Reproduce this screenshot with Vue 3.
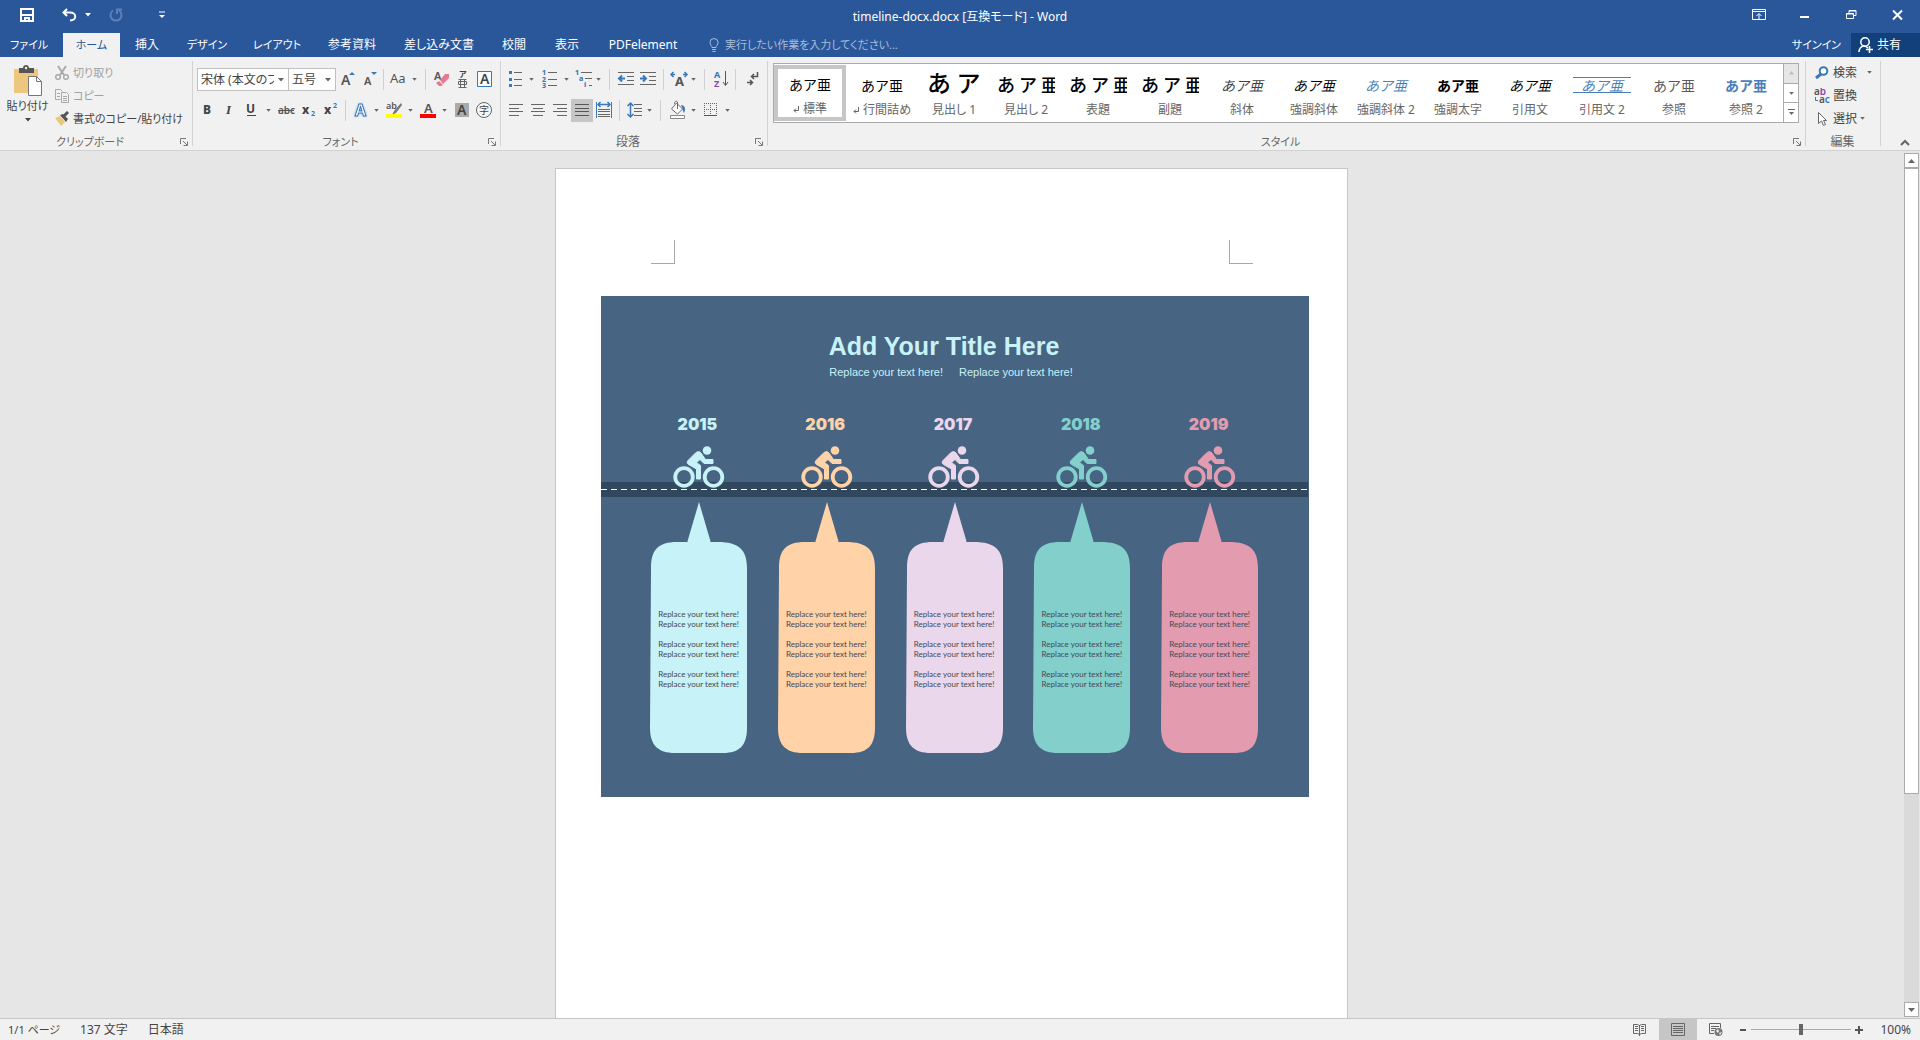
<script setup>
import { ref } from 'vue'

const GRAY = '#666'
const DARK = '#444'
const BLUE = '#3b78b8'
const PURPLE = '#8a4ba8'

// Small drawing helpers: a filled shape, a stroked line, and a letter.
const area = (d, fill, stroke = 'none') => ({ d, fill, stroke, sw: 1 })
const line = (d, stroke = GRAY, sw = 1, dash = null) => ({ d, fill: 'none', stroke, sw, dash })
const letter = (t, x, y, size, weight = 600, fill = '#555', extra = {}) => ({ t, x, y, size, weight, fill, ...extra })

const icons = {
  grow: [letter('A', 5, 17, 14), area('M13 7h6l-3-3z', BLUE)],
  shrink: [letter('A', 6, 17, 11), area('M13 4h6l-3 3z', BLUE)],
  case: [letter('Aa', 3, 15, 13, 400)],
  eraser: [letter('A', 3, 12, 11), area('M9 12l5-6h4v4l-6 6z', '#e8798c'), area('M8 13l4 4-2 1H8l-3-3z', '#e8798c')],
  ruby: [letter('ア', 8, 9, 8, 700, DARK), line('M7.5 11.5h8M7.5 19.5h8M9.5 11.5v8M13.5 11.5v8M7.5 13.5h8v3h-8z')],
  boxed: [area('M4.5 3.5h14v15h-14z', '#f8fbff', BLUE), letter('A', 7, 16, 14, 600, DARK)],
  bold: [letter('B', 7, 15, 12, 800, DARK)],
  italic: [letter('I', 8, 15, 13, 700, DARK, { family: 'Liberation Serif, serif', slant: 'italic' })],
  underline: [letter('U', 6, 14, 12, 700, DARK), line('M7 16.5h9', DARK)],
  strike: [letter('abc', 3, 15, 10), line('M3 11.5h16', '#555')],
  sub: [letter('x', 5, 15, 12, 800, DARK), letter('2', 14, 17, 7, 700, BLUE)],
  sup: [letter('x', 5, 15, 12, 800, DARK), letter('2', 14, 9, 7, 700, BLUE)],
  effect: [letter('A', 5, 17, 16, 700, '#fff', { halo: true })],
  highlight: [letter('ab', 4, 10, 9), area('M19 4l-7 8-2 4 4-2 6-8z', '#777'), area('M4 15h16v4H4z', '#ff0')],
  color: [letter('A', 7, 14, 13), area('M3 15h16v4H3z', '#f00')],
  shade: [area('M5 4h14v14H5z', '#aaa'), letter('A', 7, 16, 14, 600, DARK)],
  circled: [area('M3.5 11a7.5 7.5 0 1 1 15 0a7.5 7.5 0 1 1-15 0z', '#f8f8f8', GRAY), letter('字', 6, 15, 10, 400, DARK)],
  bullets: [area('M5 3h3v3H5zM5 10h3v3H5zM5 16h3v3H5z', BLUE), line('M10 4.5h8M10 11.5h8M10 17.5h8')],
  numbers: [letter('1', 5, 7, 7, 800, BLUE), letter('2', 5, 14, 7, 800, BLUE), letter('3', 5, 20, 7, 800, BLUE), line('M11 4.5h9M11 11.5h9M11 17.5h9')],
  multi: [letter('1', 3, 7, 7, 800, BLUE), letter('a', 7, 13, 7, 800, BLUE), letter('i', 12, 19, 7, 800, BLUE), line('M9 4.5h11M13 10.5h7M17 17.5h3')],
  outdent: [line('M2 4.5h16M11 8.5h7M11 12.5h7M2 16.5h16'), line('M9 10.5H3M6 7.5l-3 3 3 3', BLUE, 2)],
  indent: [line('M3 4.5h16M12 8.5h7M12 12.5h7M3 16.5h16'), line('M3 10.5h6M6 7.5l3 3-3 3', BLUE, 2)],
  stretch: [letter('A', 7, 18, 13, 700), line('M3 6.5h4M15 6.5h4M5.500 4l-2.500 2.500 2.500 2.500M16.500 4l2.500 2.500-2.500 2.500', BLUE, 1.5)],
  sort: [letter('A', 3, 10, 9, 700, BLUE), letter('Z', 3, 19, 9, 700, PURPLE), line('M14.5 3v14M12 14l2.500 3.500L17 14', '#555')],
  marks: [line('M17.5 4v4.5H12M14 6l-2.500 2.500 2.500 2.500M7 14.5h5M10 12l2.500 2.500L10 17', '#555', 1.5)],
  left: [line('M4 5.5h14M4 9.5h10M4 12.5h14M4 16.5h10')],
  center: [line('M4 5.5h14M6 9.5h10M4 12.5h14M6 16.5h10')],
  right: [line('M4 5.5h14M8 9.5h10M4 12.5h14M8 16.5h10')],
  justify: [line('M4 5.5h14M4 9.5h14M4 12.5h14M4 16.5h14', '#555')],
  distribute: [line('M3.5 3v16M18.5 3v16', BLUE), line('M5 5.5h12M7.500 3L5 5.500 7.500 8M14.500 3L17 5.500 14.500 8', BLUE, 1.5), line('M5 10.5h12M5 12.5h12M5 15.5h12M5 17.5h12')],
  spacing: [line('M6.5 4v14M3.5 7l3-3 3 3M3.5 15l3 3 3-3', BLUE, 1.5), line('M10 5.5h8M10 9.5h8M10 12.5h8M10 16.5h8')],
  bucket: [area('M9.5 4l6 6-5 5-6-5z', '#fff', GRAY), line('M10.5 10V3c-2-2-3 0-3 2'), area('M14 6c4 0 5 4 3 8-1-1-1-4-3-8z', BLUE), area('M3.5 16.5h14v3h-14z', '#fff', '#888')],
  borders: [line('M5 4.5h13M5 10.5h13M5.5 4v12M11.5 4v12M17.5 4v12', GRAY, 1, '1 1'), line('M5 16.5h13', '#555')],
}

const tabs = [
  { label: 'ファイル', w: 58, kana: true },
  { label: 'ホーム', w: 57, kana: true, active: true },
  { label: '挿入', w: 54 },
  { label: 'デザイン', w: 66, kana: true },
  { label: 'レイアウト', w: 74, kana: true },
  { label: '参考資料', w: 76 },
  { label: '差し込み文書', w: 98 },
  { label: '校閲', w: 52 },
  { label: '表示', w: 54 },
  { label: 'PDFelement', w: 98 },
]

const fontRow1 = [
  { icon: 'grow', w: 22, label: 'フォントの拡大' },
  { icon: 'shrink', w: 22, label: 'フォントの縮小' },
  { sep: true, w: 7 },
  { icon: 'case', w: 22, label: '文字種の変換' },
  { caret: true, w: 11 },
  { sep: true, w: 11 },
  { icon: 'eraser', w: 20, label: '書式のクリア' },
  { icon: 'ruby', w: 22, label: 'ルビ' },
  { icon: 'boxed', w: 22, label: '囲み線' },
]
const fontRow2 = [
  { icon: 'bold', w: 22, label: '太字' },
  { icon: 'italic', w: 22, label: '斜体' },
  { icon: 'underline', w: 22, label: '下線' },
  { caret: true, w: 13 },
  { icon: 'strike', w: 22, label: '取り消し線' },
  { icon: 'sub', w: 22, label: '下付き' },
  { icon: 'sup', w: 22, label: '上付き' },
  { sep: true, w: 9 },
  { icon: 'effect', w: 21, label: '文字の効果' },
  { caret: true, w: 11 },
  { icon: 'highlight', w: 22, label: '蛍光ペンの色' },
  { caret: true, w: 13 },
  { icon: 'color', w: 22, label: 'フォントの色' },
  { caret: true, w: 11 },
  { icon: 'shade', w: 23, label: '文字の網かけ' },
  { icon: 'circled', w: 22, label: '囲い文字' },
]
const paraRow1 = [
  { icon: 'bullets', w: 22, label: '箇条書き' },
  { caret: true, w: 11 },
  { icon: 'numbers', w: 24, label: '段落番号' },
  { caret: true, w: 11 },
  { icon: 'multi', w: 22, label: 'アウトライン' },
  { caret: true, w: 9 },
  { sep: true, w: 13 },
  { icon: 'outdent', w: 21, label: 'インデントを減らす' },
  { icon: 'indent', w: 22, label: 'インデントを増やす' },
  { sep: true, w: 9 },
  { icon: 'stretch', w: 21, label: '拡張書式' },
  { caret: true, w: 9 },
  { sep: true, w: 13 },
  { icon: 'sort', w: 20, label: '並べ替え' },
  { sep: true, w: 9 },
  { icon: 'marks', w: 22, label: '編集記号の表示' },
]
const paraRow2 = [
  { icon: 'left', w: 22, label: '左揃え' },
  { icon: 'center', w: 22, label: '中央揃え' },
  { icon: 'right', w: 22, label: '右揃え' },
  { icon: 'justify', w: 22, label: '両端揃え', on: true },
  { icon: 'distribute', w: 22, label: '均等割り付け' },
  { sep: true, w: 9 },
  { icon: 'spacing', w: 21, label: '行間' },
  { caret: true, w: 9 },
  { sep: true, w: 13 },
  { icon: 'bucket', w: 21, label: '塗りつぶし' },
  { caret: true, w: 11 },
  { icon: 'borders', w: 22, label: '罫線' },
  { caret: true, w: 13 },
]
const toolbars = { font: [fontRow1, fontRow2], para: [paraRow1, paraRow2] }

const styles = [
  { name: '標準', sample: 'あア亜', mark: true, on: true },
  { name: '行間詰め', sample: 'あア亜', mark: true },
  { name: '見出し 1', sample: 'あ ア', kind: 'h1' },
  { name: '見出し 2', sample: 'あ ア 亜', kind: 'h2' },
  { name: '表題', sample: 'あ ア 亜', kind: 'h2' },
  { name: '副題', sample: 'あ ア 亜', kind: 'h2' },
  { name: '斜体', sample: 'あア亜', kind: 'it' },
  { name: '強調斜体', sample: 'あア亜', kind: 'it dark' },
  { name: '強調斜体 2', sample: 'あア亜', kind: 'it blue' },
  { name: '強調太字', sample: 'あア亜', kind: 'strong' },
  { name: '引用文', sample: 'あア亜', kind: 'it dark' },
  { name: '引用文 2', sample: 'あア亜', kind: 'it blue lines' },
  { name: '参照', sample: 'あア亜', kind: 'ref' },
  { name: '参照 2', sample: 'あア亜', kind: 'strong blue' },
]

const years = [
  { year: 2015, color: '#c6f2f8' },
  { year: 2016, color: '#ffd2a8' },
  { year: 2017, color: '#ebd7eb' },
  { year: 2018, color: '#82cfcc' },
  { year: 2019, color: '#e39bb0' },
]

const zoom = ref(50)
</script>

<template>
  <div class="app">
    <svg class="defs" aria-hidden="true">
      <symbol id="i-caret" viewBox="0 0 6 4"><path d="M0 0h6L3 3.500z" fill="currentColor" /></symbol>
      <symbol id="i-launch" viewBox="0 0 8 8"><path d="M.5 6V.5H6M3 3l4 4M7.500 3.500v4h-4" fill="none" stroke="#777" /></symbol>
      <symbol id="i-cyclist" viewBox="0 0 52 42"><g fill="none" stroke="currentColor" stroke-width="3.800"><circle cx="11" cy="31" r="8.800" /><circle cx="40.500" cy="31" r="8.800" /></g><circle cx="34" cy="4.500" r="4.300" fill="currentColor" /><path d="M23 6.500Q26 4.500 28 7L32.500 13.500H40V17.500H31L27 13.500 23.500 16.500 27.500 19.500V33H23.500V23L15.500 18.500Q13 17 15 14.500Z" fill="currentColor" stroke="currentColor" stroke-linejoin="round" /></symbol>
    </svg>

    <header class="titlebar">
      <div class="quick">
        <button type="button" class="q-save" aria-label="上書き保存">
          <svg width="14" height="14"><path d="M1 1h12v12H1z" fill="none" stroke="#fff" stroke-width="2" /><path d="M2 6h10v2H2zM4 9h6v4H8v-2H6v2H4z" fill="#fff" /></svg>
        </button>
        <button type="button" class="q-undo" aria-label="元に戻す">
          <svg width="15" height="14"><path d="M5 1L1.500 4.500 5 8M2 4.500h6c7 0 7 8 0 8" fill="none" stroke="#fff" stroke-width="2" /></svg>
        </button>
        <button type="button" class="q-drop" aria-label="元に戻す一覧"><svg width="6" height="4"><use href="#i-caret" /></svg></button>
        <button type="button" class="q-redo" aria-label="やり直し">
          <svg width="14" height="14"><path d="M4 2.500a5.500 5.500 0 1 0 6 0M8 6V1.500h5" fill="none" stroke="#5c80b8" stroke-width="2" /></svg>
        </button>
        <button type="button" class="q-more" aria-label="クイック アクセス ツール バーのカスタマイズ">
          <svg width="6" height="8"><path d="M0 1h6" stroke="#fff" stroke-width="1" /><path d="M0 4h6L3 7z" fill="#fff" /></svg>
        </button>
      </div>
      <h1 class="title">timeline-docx.docx [互換モード] - Word</h1>
      <div class="window">
        <button type="button" aria-label="リボンの表示オプション"><svg width="14" height="12"><path d="M.5 .5h13v10h-13zM1 2.500h12M7 10V5M4.500 7L7 4.500 9.500 7" fill="none" stroke="#fff" /></svg></button>
        <button type="button" aria-label="最小化"><svg width="10" height="12"><path d="M0 8h9" stroke="#fff" stroke-width="2" /></svg></button>
        <button type="button" aria-label="元に戻す (縮小)"><svg width="11" height="12"><path d="M.5 4.500h7v5h-7zM.5 5h7M3 4V1.500h7v5H8M3 2h7" fill="none" stroke="#fff" /></svg></button>
        <button type="button" aria-label="閉じる"><svg width="11" height="12"><path d="M1 1.500l9 9M10 1.500l-9 9" stroke="#fff" stroke-width="2" /></svg></button>
      </div>
    </header>

    <nav class="tabs">
      <button v-for="t in tabs" :key="t.label" type="button" class="tab" :class="{ active: t.active, kana: t.kana }" :style="{ width: t.w + 'px' }">{{ t.label }}</button>
      <label class="tell">
        <svg width="10" height="14" aria-hidden="true"><path d="M3 9.500C3 8 1 7 1 4.500a4 4 0 0 1 8 0C9 7 7 8 7 9.500zM3 11.500h4M3.500 13.500h3" fill="none" stroke="#a9bdd9" /></svg>
        <input type="text" class="kana" placeholder="実行したい作業を入力してください..." aria-label="実行したい作業" />
      </label>
      <a class="signin kana" href="#">サインイン</a>
      <button type="button" class="share">
        <svg width="15" height="16" aria-hidden="true"><circle cx="7" cy="5" r="4.200" fill="none" stroke="#fff" stroke-width="1.500" /><path d="M1 15c0-3 2-6 5-6 2 0 3 1 4 2M8 12.500h7M11.500 9v7" fill="none" stroke="#fff" stroke-width="1.500" /></svg>
        共有
      </button>
    </nav>

    <section class="ribbon">
      <div class="group clipboard">
        <div class="content">
          <button type="button" class="paste kana">
            <svg width="30" height="31" aria-hidden="true"><path d="M1 4h24v24H1z" fill="#ecc77d" /><path d="M6 8V3h4c0-4 6-4 6 0h5v5z" fill="#555" /><circle cx="13" cy="3" r="1.200" fill="#f1f1f1" /><path d="M15.500 11.500h8l5 5v14h-13z" fill="#fff" stroke="#777" /><path d="M23.500 11.500v5h5" fill="none" stroke="#777" /></svg>
            <span>貼り付け</span>
            <svg width="6" height="4" aria-hidden="true"><use href="#i-caret" /></svg>
          </button>
          <div class="stack">
            <button type="button" class="dim kana">
              <svg width="14" height="16" aria-hidden="true"><path d="M3 1l6 9M11 1l-6 9" stroke="#aaa" stroke-width="2" /><circle cx="3" cy="12" r="2.300" fill="none" stroke="#aaa" stroke-width="1.500" /><circle cx="11" cy="12" r="2.300" fill="none" stroke="#aaa" stroke-width="1.500" /></svg>切り取り
            </button>
            <button type="button" class="dim kana">
              <svg width="14" height="16" aria-hidden="true"><path d="M5.500 11.500h-5v-10h5l2 2M6.500 4.500h5l2 2v8h-7z" fill="none" stroke="#aaa" /><path d="M2 5.500h3M2 8.500h3M8 8.500h4M8 10.500h4M8 12.500h4" stroke="#aaa" /></svg>コピー
            </button>
            <button type="button" class="kana">
              <svg width="14" height="16" aria-hidden="true"><path d="M0 7l5-2 5 6-4 4z" fill="#ecc77d" /><path d="M5 4l3-1 5 5-2 3z" fill="#555" /><path d="M9 5l4-4" stroke="#555" stroke-width="3" /></svg>書式のコピー/貼り付け
            </button>
          </div>
        </div>
        <div class="caption"><span class="kana">クリップボード</span><button type="button" aria-label="クリップボードの詳細"><svg width="8" height="8"><use href="#i-launch" /></svg></button></div>
      </div>

      <div v-for="(rows, key) in toolbars" :key="key" class="group" :class="key">
        <div class="content rows">
          <div v-for="(row, r) in rows" :key="r" class="row">
            <template v-if="key === 'font' && r === 0">
              <span class="combo name"><select aria-label="フォント"><option>宋体 (本文のフォント)</option></select><svg width="6" height="4" aria-hidden="true"><use href="#i-caret" /></svg></span>
              <span class="combo size"><select aria-label="フォント サイズ"><option>五号</option></select><svg width="6" height="4" aria-hidden="true"><use href="#i-caret" /></svg></span>
            </template>
            <template v-for="(it, n) in row" :key="n">
              <span v-if="it.sep" class="sep" :style="{ width: it.w + 'px' }"></span>
              <button v-else-if="it.caret" type="button" class="drop" aria-label="その他" :style="{ width: it.w + 'px' }"><svg width="5" height="3"><use href="#i-caret" /></svg></button>
              <button v-else type="button" class="tool" :class="{ on: it.on }" :aria-label="it.label" :style="{ width: it.w + 'px' }">
                <svg width="22" height="22">
                  <template v-for="(g, k) in icons[it.icon]" :key="k">
                    <text v-if="g.t" :class="{ halo: g.halo }" :x="g.x" :y="g.y" :font-size="g.size" :font-weight="g.weight" :font-family="g.family" :font-style="g.slant" :fill="g.fill">{{ g.t }}</text>
                    <path v-else :d="g.d" :fill="g.fill" :stroke="g.stroke" :stroke-width="g.sw" :stroke-dasharray="g.dash" />
                  </template>
                </svg>
              </button>
            </template>
          </div>
        </div>
        <div class="caption"><span :class="{ kana: key === 'font' }">{{ key === 'font' ? 'フォント' : '段落' }}</span><button type="button" aria-label="詳細"><svg width="8" height="8"><use href="#i-launch" /></svg></button></div>
      </div>

      <div class="group styles">
        <div class="content">
          <div class="gallery">
            <div class="items">
              <button v-for="s in styles" :key="s.name" type="button" class="style" :class="{ on: s.on }">
                <span class="sample" :class="s.kind">{{ s.sample }}</span>
                <span class="name"><svg v-if="s.mark" width="6" height="7" aria-hidden="true"><path d="M5.500 0v4.500H1M3 2.500l-2 2 2 2" fill="none" stroke="#666" /></svg>{{ s.name }}</span>
              </button>
            </div>
            <div class="pager">
              <button type="button" class="off" aria-label="前の行"><svg width="5" height="4"><path d="M0 3.500h5L2.500 0z" fill="#bbb" /></svg></button>
              <button type="button" aria-label="次の行"><svg width="5" height="3"><use href="#i-caret" /></svg></button>
              <button type="button" aria-label="すべてのスタイル"><svg width="7" height="7"><path d="M0 .5h7" stroke="#666" /><path d="M1 3h5L3.500 6z" fill="#666" /></svg></button>
            </div>
          </div>
        </div>
        <div class="caption"><span class="kana">スタイル</span><button type="button" aria-label="スタイルの詳細"><svg width="8" height="8"><use href="#i-launch" /></svg></button></div>
      </div>

      <div class="group editing">
        <div class="content stack">
          <button type="button"><svg width="16" height="16" aria-hidden="true"><circle cx="9.500" cy="6" r="3.800" fill="#fff" stroke="#3b78b8" stroke-width="2" /><path d="M7 9l-5 4" stroke="#3b78b8" stroke-width="3" /></svg>検索<svg class="far" width="5" height="3" aria-hidden="true"><use href="#i-caret" /></svg></button>
          <button type="button"><svg width="16" height="16" aria-hidden="true"><g font-size="10" font-weight="600"><text x="0" y="7"><tspan fill="#555">a</tspan><tspan fill="#8a4ba8">b</tspan></text><text x="5" y="15"><tspan fill="#555">a</tspan><tspan fill="#3b78b8">c</tspan></text></g><path d="M1.500 9v3.500H4" fill="none" stroke="#3b78b8" /></svg>置換</button>
          <button type="button"><svg width="16" height="16" aria-hidden="true"><path d="M4.500 1.500v11l3-2.500 2 4.500 2-1-2-4h3z" fill="#fff" stroke="#666" /></svg>選択<svg class="near" width="5" height="3" aria-hidden="true"><use href="#i-caret" /></svg></button>
        </div>
        <div class="caption"><span>編集</span></div>
      </div>
      <button type="button" class="collapse" aria-label="リボンを折りたたむ"><svg width="10" height="7"><path d="M1 6l4-4 4 4" fill="none" stroke="#666" stroke-width="2" /></svg></button>
    </section>

    <main class="work">
      <div class="canvas">
        <article class="page">
          <div class="margins"><i class="corner tl"></i><i class="corner tr"></i></div>
          <div class="picture">
            <h2>Add Your Title Here</h2>
            <p class="lead"><span>Replace your text here!</span><span>Replace your text here!</span></p>
            <div class="columns heads">
              <div v-for="y in years" :key="y.year" class="head" :style="{ color: y.color }">
                <strong>{{ y.year }}</strong>
                <svg width="52" height="42" aria-hidden="true"><use href="#i-cyclist" /></svg>
              </div>
            </div>
            <div class="road"></div>
            <div class="columns">
              <div v-for="y in years" :key="y.year" class="callout" :style="{ color: y.color }">
                <svg viewBox="0 0 97 251" aria-hidden="true"><path d="M37 41L49 0L61 41V40H68C89 40 97 48 97 66V226C97 243 90 251 73 251H25C8 251 0 243 0 226L1 66C1 48 8 40 27 40H37Z" fill="currentColor" /></svg>
                <div class="note">
                  <p v-for="k in 3" :key="k">Replace your text here!<br />Replace your text here!</p>
                </div>
              </div>
            </div>
          </div>
        </article>
      </div>
      <div class="scroll">
        <button type="button" aria-label="上へスクロール"><svg width="7" height="4"><path d="M0 4h7L3.500 0z" fill="#666" /></svg></button>
        <div class="rail"><div class="thumb"></div></div>
        <button type="button" aria-label="下へスクロール"><svg width="7" height="4"><path d="M0 0h7L3.500 4z" fill="#666" /></svg></button>
      </div>
    </main>

    <footer class="status">
      <span class="kana">1/1 ページ</span><span>137 文字</span><span>日本語</span>
      <div class="views">
        <button type="button" aria-label="閲覧モード"><svg width="14" height="14"><path d="M6.500 2.500l-2-1h-4v9h4l2 1 2-1h4v-9h-4zM6.500 2v11M2 3.500h3M2 5.500h3M2 7.500h3M8 3.500h3M8 5.500h3M8 7.500h3" fill="none" stroke="#666" /></svg></button>
        <button type="button" class="on" aria-label="印刷レイアウト"><svg width="14" height="14"><path d="M.5 .5h13v12H.5zM2 3.500h10M2 5.500h10M2 7.500h10M2 9.500h10" fill="none" stroke="#666" /></svg></button>
        <button type="button" aria-label="Web レイアウト"><svg width="14" height="14"><path d="M5 10.500H.5V.5h11V5M2 3.500h8M2 5.500h5M2 7.500h3" fill="none" stroke="#666" /><circle cx="9.500" cy="9" r="4" fill="#777" /><path d="M7 8l2-2 1 2-1 2zM10 10l3-1-2 3z" fill="#f1f1f1" /></svg></button>
      </div>
      <div class="zoom">
        <button type="button" aria-label="縮小"><svg width="8" height="8"><path d="M1 4h6" stroke="#555" stroke-width="2" /></svg></button>
        <input v-model="zoom" type="range" min="0" max="100" aria-label="ズーム" />
        <button type="button" aria-label="拡大"><svg width="8" height="8"><path d="M0 4h8M4 0v8" stroke="#555" stroke-width="2" /></svg></button>
      </div>
      <span class="percent">100%</span>
    </footer>
  </div>
</template>

<style>
body {
  margin: 0;
  overflow: hidden;
}
</style>

<style scoped>
.app {
  display: flex;
  flex-direction: column;
  height: 100vh;
  font: 12px/16px "Noto Sans", "Noto Sans CJK JP", sans-serif;
  font-feature-settings: "palt";
  color: #444;
  background: #e6e6e6;
}
.app *,
.app {
  box-sizing: border-box;
}
.defs {
  position: absolute;
  width: 0;
  height: 0;
}
button,
select,
input {
  margin: 0;
  padding: 0;
  border: 0;
  border-radius: 0;
  background: none;
  font: inherit;
  font-feature-settings: inherit;
  color: inherit;
  white-space: nowrap;
}
.app .kana {
  font-size: 11px;
}
svg {
  display: block;
  flex: none;
}
.halo {
  stroke: #3b78b8;
  filter: drop-shadow(0 0 1px #8ab8e8);
}

.titlebar {
  display: grid;
  grid-template-columns: 1fr auto 1fr;
  height: 33px;
  background: #2a579a;
  color: #fff;
}
.quick {
  display: flex;
  align-items: center;
  padding: 0 0 3px 20px;
}
.q-undo {
  margin-left: 28px;
}
.q-drop {
  margin-left: 8px;
}
.q-redo {
  margin-left: 18px;
}
.q-more {
  margin-left: 36px;
}
.title {
  margin: 0;
  font-size: 12px;
  font-weight: 400;
  line-height: 33px;
}
.window {
  display: flex;
  justify-content: flex-end;
  padding-bottom: 3px;
}
.window button {
  display: flex;
  align-items: center;
  justify-content: center;
  width: 46px;
}

.tabs {
  display: flex;
  height: 24px;
  background: #2a579a;
  color: #fff;
}
.tab {
  text-align: center;
}
.tab:first-child {
  margin-right: 5px;
}
.tab.active {
  background: #f1f1f1;
  color: #2a579a;
}
.tell {
  display: flex;
  flex: 1;
  align-items: center;
  gap: 6px;
  margin-left: 17px;
}
.tell input {
  flex: 1;
  outline: 0;
}
.tell input::placeholder {
  color: #a9bdd9;
  opacity: 1;
}
.signin {
  margin-right: 10px;
  color: #fff;
  line-height: 24px;
  text-decoration: none;
}
.share {
  display: flex;
  align-items: center;
  gap: 4px;
  width: 69px;
  padding-left: 7px;
  background: #12407a;
}

.ribbon {
  display: flex;
  height: 94px;
  border-bottom: 1px solid #d2d2d2;
  background: #f1f1f1;
}
.group {
  display: flex;
  flex-direction: column;
  position: relative;
}
.group::after {
  content: "";
  position: absolute;
  top: 4px;
  right: 0;
  bottom: 4px;
  width: 1px;
  background: #d2d2d2;
}
.clipboard {
  width: 193px;
}
.font {
  width: 308px;
}
.para {
  width: 267px;
}
.styles {
  flex: 1;
  min-width: 0;
}
.editing {
  width: 75px;
}
.content {
  display: flex;
  height: 75px;
}
.caption {
  display: flex;
  align-items: center;
  height: 18px;
  padding: 1px 5px 0 0;
  color: #666;
}
.caption span {
  flex: 1;
  text-align: center;
}
.editing .caption {
  padding-right: 2px;
}
.paste {
  display: flex;
  flex-direction: column;
  align-items: center;
  width: 55px;
  padding-top: 8px;
}
.paste span {
  margin: 2px 0 4px;
}
.stack {
  display: flex;
  flex-direction: column;
  padding-top: 4px;
}
.stack button {
  display: flex;
  align-items: center;
  gap: 4px;
  height: 23px;
}
.stack .dim {
  color: #a0a0a0;
}
.editing .stack {
  padding-left: 8px;
}
.editing .stack button {
  gap: 3px;
}
.editing .stack .far {
  margin-left: 7px;
}

.rows {
  flex-direction: column;
  gap: 8px;
  padding-top: 11px;
}
.row {
  display: flex;
  height: 23px;
  padding-left: 3px;
}
.para .row:last-child {
  padding-left: 4px;
}
.tool {
  display: flex;
  align-items: flex-start;
}
.tool.on {
  background: #c6c6c6;
}
.drop,
.sep {
  display: flex;
  align-items: center;
  justify-content: center;
}
.drop,
.near,
.far {
  color: #666;
}
.sep::before {
  content: "";
  width: 1px;
  height: 21px;
  background: #d0d0d0;
}
.combo {
  display: flex;
  align-items: center;
  height: 23px;
  padding-left: 3px;
  border: 1px solid #c0c0c0;
  background: #fff;
}
.combo.name {
  width: 92px;
  margin-left: 1px;
}
.combo.size {
  width: 48px;
  margin-left: -1px;
}
.combo select {
  flex: 1;
  min-width: 0;
  overflow: hidden;
  appearance: none;
}
.combo svg {
  margin: 0 4px;
  color: #666;
}

.styles .content {
  padding: 6px 7px 8px 5px;
}
.gallery {
  display: flex;
  flex: 1;
  min-width: 0;
  height: 60px;
  border: 1px solid #ababab;
  background: #fff;
}
.items {
  display: flex;
  flex: 1;
  min-width: 0;
  overflow: hidden;
}
.style {
  display: flex;
  flex: none;
  flex-direction: column;
  align-items: center;
  width: 72px;
  height: 56px;
  margin-top: 1px;
  padding-top: 4px;
  border: 0 solid #c6c6c6;
}
.style.on {
  padding-top: 0;
  border-width: 4px;
}
.sample {
  display: flex;
  align-items: center;
  justify-content: center;
  width: 58px;
  height: 31px;
  overflow: hidden;
  font-family: "Noto Sans CJK JP", sans-serif;
  font-feature-settings: normal;
  font-size: 14px;
  color: #000;
  white-space: pre;
}
.sample.h1,
.sample.h2 {
  justify-content: flex-start;
  padding-bottom: 2px;
  font-size: 18px;
  font-weight: 500;
}
.sample.h1 {
  width: 54px;
  padding-bottom: 6px;
  font-size: 24px;
}
.sample.it {
  font-style: italic;
  color: #404040;
}
.sample.dark {
  color: #000;
}
.sample.blue {
  color: #4a7ebb;
}
.sample.strong {
  font-weight: 700;
}
.sample.ref {
  color: #5a5a5a;
}
.sample.lines {
  height: 16px;
  margin: 8px 0 7px;
  border: solid #4a7ebb;
  border-width: 1px 0;
}
.style .name {
  display: flex;
  align-items: center;
  gap: 4px;
  margin-top: 2px;
  color: #666;
}
.pager {
  display: flex;
  flex-direction: column;
  width: 15px;
  border-left: 1px solid #ababab;
  color: #666;
}
.pager button {
  display: flex;
  flex: 1;
  align-items: center;
  justify-content: center;
}
.pager button + button {
  border-top: 1px solid #ababab;
}
.pager .off {
  background: #e6e6e6;
}
.collapse {
  display: flex;
  align-items: flex-end;
  justify-content: flex-end;
  width: 39px;
  padding: 0 10px 4px 0;
}

.work {
  display: flex;
  flex: 1;
  min-height: 0;
}
.canvas {
  flex: 1;
  overflow: hidden;
  padding: 17px 1px 0 0;
}
.page {
  width: 793px;
  min-height: 1123px;
  margin: 0 auto;
  border: 1px solid #c6c6c6;
  background: #fff;
}
.margins {
  display: flex;
  justify-content: space-between;
  padding: 71px 94px 0 95px;
}
.corner {
  width: 24px;
  height: 24px;
  border-bottom: 1px solid #aaa;
}
.tl {
  border-right: 1px solid #aaa;
}
.tr {
  border-left: 1px solid #aaa;
}
.picture {
  height: 501px;
  margin: 32px 38px 0 45px;
  padding-top: 34px;
  background: #476482;
  color: #c6f2f8;
  font-family: "Liberation Sans", Arial, sans-serif;
}
.picture h2 {
  margin: 0 22px 0 0;
  font-size: 25px;
  line-height: 32px;
  text-align: center;
}
.lead {
  display: flex;
  justify-content: center;
  gap: 16px;
  margin: 2px 8px 0 0;
  font-size: 11px;
}
.columns {
  display: grid;
  grid-template-columns: repeat(5, 1fr);
  padding: 0 35px 0 34px;
}
.heads {
  position: relative;
  z-index: 1;
  margin: 36px 0 -6px;
}
.head {
  display: flex;
  flex-direction: column;
  align-items: center;
  gap: 14px;
}
.head strong {
  padding-right: 3px;
  font: 900 16px/16px Inter, sans-serif;
}
.road {
  height: 15px;
  margin-right: 1px;
  padding-top: 7px;
  background: #31475d;
}
.road::before {
  content: "";
  display: block;
  height: 1px;
  background: repeating-linear-gradient(90deg, #fff 0 6px, transparent 6px 10px);
}
.callout {
  position: relative;
  width: 97px;
  height: 251px;
  margin: 5px 0 0 15px;
}
.callout svg {
  position: absolute;
  inset: 0;
}
.note {
  display: flex;
  position: relative;
  flex-direction: column;
  gap: 10px;
  padding-top: 107px;
  color: #434a52;
  font: 8px/10px Lato, sans-serif;
  text-align: center;
}
.note p {
  margin: 0;
}

.scroll {
  display: flex;
  flex-direction: column;
  width: 16px;
  padding: 2px 1px 1px 0;
}
.scroll button {
  display: flex;
  align-items: center;
  justify-content: center;
  height: 15px;
  border: 1px solid #ababab;
  background: #fff;
}
.rail {
  flex: 1;
  background: #dadada;
}
.thumb {
  height: 75%;
  border: 1px solid #ababab;
  background: #fff;
}

.status {
  display: flex;
  align-items: center;
  height: 22px;
  padding: 0 9px 0 8px;
  border-top: 1px solid #c6c6c6;
  background: #f1f1f1;
}
.status > span {
  margin-right: 20px;
}
.views {
  display: flex;
  align-self: stretch;
  margin-left: auto;
}
.views button {
  display: flex;
  align-items: center;
  justify-content: center;
  width: 38px;
}
.views .on {
  background: #c6c6c6;
}
.zoom {
  display: flex;
  align-items: center;
  gap: 4px;
  margin: 0 17px 0 4px;
}
.zoom input {
  width: 100px;
  height: 12px;
  appearance: none;
  background: linear-gradient(#aaa, #aaa) center / 100% 1px no-repeat;
}
.zoom input::-webkit-slider-thumb {
  appearance: none;
  width: 4px;
  height: 11px;
  background: #666;
}
.status > .percent {
  margin-right: 0;
}
</style>
